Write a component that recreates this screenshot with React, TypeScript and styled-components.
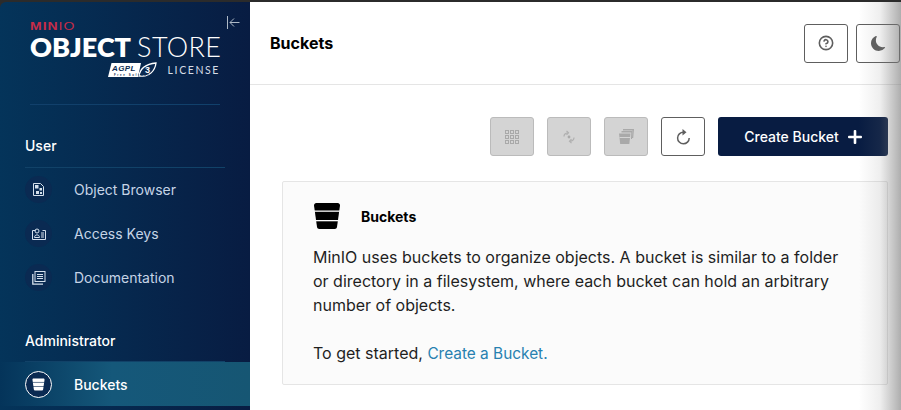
import React from 'react';
import styled, { createGlobalStyle } from 'styled-components';
import { FiHelpCircle } from 'react-icons/fi';
import { BsMoonFill } from 'react-icons/bs';

const GlobalStyle = createGlobalStyle`
  html, body {
    margin: 0;
    padding: 0;
    height: 100%;
    background: #fff;
    font-family: Inter, "Liberation Sans", sans-serif;
    overflow: hidden;
  }
`;

const BucketGlyph = ({ size, color, bar }: { size: number; color: string; bar: string }) => (
  <svg width={size} height={size} viewBox="0 0 28 28">
    <path d="M1 3.500C1 2.200 2 1 3.300 1h21.400C26 1 27 2.200 27 3.500L24 25c-.2 1.200-1.100 2-2.300 2H6.300c-1.200 0-2.100-.8-2.300-2z" fill={color} />
    <rect x="1" y="8.500" width="26" height="1.300" fill={bar} />
    <rect x="1" y="18" width="26" height="1.300" fill={bar} />
  </svg>
);

const ObjectIcon = () => (
  <svg width="11" height="13" viewBox="0 0 11 13" fill="none">
    <path d="M.5.5h7l3 3v9H.500z" stroke="#d5e0ec" fill="#0a2a52" />
    <rect x="2" y="2" width="3.500" height="3.500" fill="#d5e0ec" />
    <rect x="6.500" y="5" width="2.500" height="2.500" fill="#d5e0ec" />
    <rect x="3" y="8" width="3" height="3" fill="#d5e0ec" />
    <rect x="7" y="9" width="2" height="2" fill="#d5e0ec" />
  </svg>
);

const KeysIcon = () => (
  <svg width="14" height="12" viewBox="0 0 14 12" fill="none" stroke="#d5e0ec">
    <path d="M3.500 2.500H.5v9h13v-9h-3" />
    <circle cx="5" cy="3" r="2" />
    <path d="M2.500 9.500c0-3.500 5-3.500 5 0z" />
    <path d="M9 5h3M9 7h3M9 9h3" />
  </svg>
);

const DocsIcon = () => (
  <svg width="14" height="14" viewBox="0 0 14 14" fill="none" stroke="#d5e0ec">
    <rect x="3" y="0.500" width="10" height="10" />
    <path d="M5 3.500h6M5 5.500h6M5 7.500h6" />
    <path d="M.8 3v10.200H11" strokeWidth="1.300" />
  </svg>
);

const GridIcon = () => (
  <svg width="14" height="14" viewBox="0 0 14 14" fill="none" stroke="#a9a9a9">
    {[0, 5, 10].map((y) => [0, 5, 10].map((x) => <rect key={`${x}-${y}`} x={x + 0.5} y={y + 0.5} width="3" height="3" />))}
  </svg>
);

const SyncIcon = () => (
  <svg width="12" height="14" viewBox="0 0 12 14" fill="none" stroke="#b0b0b0" strokeWidth="1.200">
    <path d="M1 6.500C1 4.500 2.500 3 5 2.800" />
    <path d="M11 7.500c0 2-1.500 3.500-4 3.700" />
    <path d="M3.500.8l2 2-2 2M8.500 9.200l-2 2 2 2" />
    <circle cx="6" cy="7" r="1.400" fill="#a9a9a9" stroke="none" />
  </svg>
);

const StackedBucketsIcon = () => (
  <svg width="15" height="15" viewBox="0 0 15 15" fill="#a9a9a9">
    <path d="M4 0h11l-.8 9H13l.6-7.500H4z" />
    <path d="M2.500 2h11l-.5 8h-1l.3-6.500H2.500z" />
    <path d="M0 4.500h11.500L10.300 15H1.200z" />
    <rect x="0.500" y="8" width="10.500" height="1" fill="#d4d4d4" />
  </svg>
);

const RefreshIcon = () => (
  <svg width="15" height="17" viewBox="0 0 15 17" fill="none" stroke="#5e5e5e" strokeWidth="1.500">
    <path d="M13.200 10A5.800 5.800 0 1 1 7.500 4.200" />
    <path d="M6.500 1l4 3.200-4 3.200z" fill="#5e5e5e" stroke="none" />
  </svg>
);

const Page = styled.div`
  position: relative;
  display: flex;
  width: 901px;
  height: 410px;
  overflow: hidden;
  background: #2b2b2b;
  padding-top: 2px;
  box-sizing: border-box;
`;

const Sidebar = styled.aside`
  width: 250px;
  flex: none;
  display: flex;
  flex-direction: column;
  border-top-left-radius: 6px;
  background: linear-gradient(90deg, #04345a 0%, #081c42 100%);
  position: relative;
`;

const Collapse = styled.svg`
  position: absolute;
  top: 14px;
  left: 227px;
`;

const Logo = styled.div`
  padding: 20px 0 0 30px;
  height: 82px;
  width: 190px;
`;

const MinioMark = styled.div`
  font-size: 10px;
  line-height: 10px;
  letter-spacing: 0.7px;
  font-family: "Liberation Sans", sans-serif;
  font-weight: 700;
  color: #c72c48;
  transform: scaleX(1.4);
  transform-origin: left;
  span {
    font-weight: 400;
  }
`;

const Wordmark = styled.div`
  color: #fff;
  font-family: Lato, sans-serif;
  font-size: 27px;
  line-height: 27px;
  margin-top: 1px;
  white-space: nowrap;
  b {
    font-weight: 800;
  }
  span {
    font-weight: 300;
    margin-left: 6px;
    letter-spacing: 0.4px;
  }
`;

const LicenseRow = styled.div`
  display: flex;
  justify-content: flex-end;
  align-items: center;
  gap: 11px;
  margin-top: 2px;
  color: #d6dde6;
  font-family: Lato, sans-serif;
  font-size: 10.500px;
  letter-spacing: 1.600px;
`;

const Rule = styled.div`
  margin-left: 30px;
  width: 190px;
  height: 1px;
  background: #11406b;
`;

const SectionTitle = styled.div`
  margin: 32px 25px 0;
  height: 24px;
  padding-bottom: 6px;
  border-bottom: 1px solid #114268;
  color: #fff;
  font-size: 14px;
  line-height: 17px;
  font-weight: 500;
`;

const Items = styled.div`
  display: flex;
  flex-direction: column;
  gap: 17px;
  padding: 8px 0 0 25px;
`;

const Item = styled.div`
  display: flex;
  align-items: center;
  gap: 22px;
  height: 27px;
  color: #c5d4e6;
  font-size: 14px;
`;

const IconCircle = styled.span`
  width: 27px;
  height: 27px;
  border-radius: 50%;
  background: #0a2a52;
  display: flex;
  align-items: center;
  justify-content: center;
`;

const ActiveItem = styled.div`
  display: flex;
  align-items: center;
  gap: 22px;
  height: 44px;
  padding-left: 25px;
  color: #fff;
  font-size: 14px;
  font-weight: 500;
  background: linear-gradient(90deg, #04345a 0%, #15587a 45%, #165673 100%);
`;

const ActiveCircle = styled.span`
  width: 27px;
  height: 27px;
  box-sizing: border-box;
  border: 1px solid #fff;
  border-radius: 50%;
  background: #0a2a52;
  display: flex;
  align-items: center;
  justify-content: center;
`;

const AdminTitle = styled(SectionTitle)`
  margin-top: 41px;
  height: 23px;
`;

const Main = styled.main`
  flex: 1;
  display: flex;
  flex-direction: column;
  background: #fff;
  min-width: 0;
`;

const Header = styled.header`
  height: 83px;
  flex: none;
  box-sizing: border-box;
  border-bottom: 1px solid #e5e5e5;
  display: flex;
  align-items: center;
  justify-content: space-between;
  padding: 0 1px 0 20px;
`;

const Title = styled.h1`
  margin: 0;
  font-size: 16px;
  font-weight: 700;
  color: #000;
`;

const HeaderActions = styled.div`
  display: flex;
  gap: 8px;
`;

const HeaderButton = styled.button`
  width: 44px;
  height: 39px;
  padding: 0;
  border: 1px solid #5e5e5e;
  border-radius: 3px;
  background: #fff;
  color: #5e5e5e;
  display: flex;
  align-items: center;
  justify-content: center;
`;

const Toolbar = styled.div`
  display: flex;
  justify-content: flex-end;
  align-items: center;
  gap: 13px;
  padding: 32px 13px 0 0;
`;

const IconButton = styled.button<{ $disabled?: boolean }>`
  width: 44px;
  height: 39px;
  padding: 0;
  border-radius: 3px;
  border: 1px solid ${(p) => (p.$disabled ? '#bbbbbb' : '#5e5e5e')};
  background: ${(p) => (p.$disabled ? '#d4d4d4' : '#fff')};
  display: flex;
  align-items: center;
  justify-content: center;
`;

const CreateButton = styled.button`
  width: 170px;
  height: 39px;
  border: 0;
  padding: 0;
  border-radius: 3px;
  background: #081c42;
  color: #fff;
  font-family: inherit;
  font-size: 14px;
  font-weight: 500;
  display: flex;
  align-items: center;
  justify-content: center;
  gap: 9px;
`;

const HelpBox = styled.section`
  margin: 25px 13px 0 32px;
  height: 204px;
  box-sizing: border-box;
  background: #fbfbfb;
  border: 1px solid #e5e5e5;
  border-radius: 2px;
  padding: 20px 30px;
`;

const HelpTitle = styled.div`
  display: flex;
  align-items: center;
  gap: 20px;
  font-size: 14px;
  font-weight: 700;
  color: #000;
`;

const HelpText = styled.p`
  margin: 15px 0 0;
  font-size: 16px;
  line-height: 24px;
  color: #1f1f1f;
  width: 530px;
`;

const HelpLink = styled.a`
  color: #2781b0;
  font-size: 15.400px;
`;

const EdgeShade = styled.div`
  position: absolute;
  top: 2px;
  right: 0;
  bottom: 0;
  width: 42px;
  background: linear-gradient(90deg, rgba(120, 120, 120, 0) 0%, rgba(120, 120, 120, 0.12) 50%, rgba(120, 120, 120, 0.6) 100%);
  pointer-events: none;
`;

export default function App() {
  return (
    <>
      <GlobalStyle />
      <Page>
        <Sidebar>
          <Collapse width="13" height="13" viewBox="0 0 13 13" fill="none" stroke="#aeb9c6">
            <path d="M.5 0v13M12.500 6.500H3M7 2.500L3 6.500l4 4" />
          </Collapse>
          <Logo>
            <MinioMark>
              MIN<span>IO</span>
            </MinioMark>
            <Wordmark>
              <b>OBJECT</b>
              <span>STORE</span>
            </Wordmark>
            <LicenseRow>
              <svg width="49" height="16" viewBox="0 0 49 16">
                <path d="M3.500 1H33l-3 14H0z" fill="#fff" />
                <path d="M31 14c1-7 7-12 17-13-1 8-7 14-15 13z" fill="#0a2a52" stroke="#fff" strokeWidth="1.300" />
                <text x="37" y="11" fontSize="9" fontWeight="700" fill="#fff" fontFamily="Liberation Sans">3</text>
                <text x="4" y="9" fontSize="8" fontStyle="italic" fontWeight="700" fill="#0a2a52" fontFamily="Liberation Sans" textLength="25">AGPL</text>
                <text x="6" y="14" fontSize="2.800" fontWeight="700" fill="#0a2a52" fontFamily="Liberation Sans">Free Software</text>
              </svg>
              LICENSE
            </LicenseRow>
          </Logo>
          <Rule />
          <SectionTitle>User</SectionTitle>
          <Items>
            <Item>
              <IconCircle><ObjectIcon /></IconCircle>
              Object Browser
            </Item>
            <Item>
              <IconCircle><KeysIcon /></IconCircle>
              Access Keys
            </Item>
            <Item>
              <IconCircle><DocsIcon /></IconCircle>
              Documentation
            </Item>
          </Items>
          <AdminTitle>Administrator</AdminTitle>
          <ActiveItem>
            <ActiveCircle>
              <BucketGlyph size={13} color="#fff" bar="#0a2a52" />
            </ActiveCircle>
            Buckets
          </ActiveItem>
        </Sidebar>
        <Main>
          <Header>
            <Title>Buckets</Title>
            <HeaderActions>
              <HeaderButton><FiHelpCircle size={16} strokeWidth={2.400} /></HeaderButton>
              <HeaderButton><BsMoonFill size={15} /></HeaderButton>
            </HeaderActions>
          </Header>
          <Toolbar>
            <IconButton $disabled><GridIcon /></IconButton>
            <IconButton $disabled><SyncIcon /></IconButton>
            <IconButton $disabled><StackedBucketsIcon /></IconButton>
            <IconButton><RefreshIcon /></IconButton>
            <CreateButton>
              Create Bucket
              <svg width="14" height="14" viewBox="0 0 14 14" fill="#fff">
                <rect x="5.700" y="0" width="2.600" height="14" rx="1" />
                <rect x="0" y="5.700" width="14" height="2.600" rx="1" />
              </svg>
            </CreateButton>
          </Toolbar>
          <HelpBox>
            <HelpTitle>
              <BucketGlyph size={28} color="#000" bar="#fbfbfb" />
              Buckets
            </HelpTitle>
            <HelpText>
              MinIO uses buckets to organize objects. A bucket is similar to a folder or directory in a filesystem, where each bucket can hold an arbitrary number of objects.
              <br />
              <br />
              To get started, <HelpLink>Create a Bucket.</HelpLink>
            </HelpText>
          </HelpBox>
        </Main>
        <EdgeShade />
      </Page>
    </>
  );
}
